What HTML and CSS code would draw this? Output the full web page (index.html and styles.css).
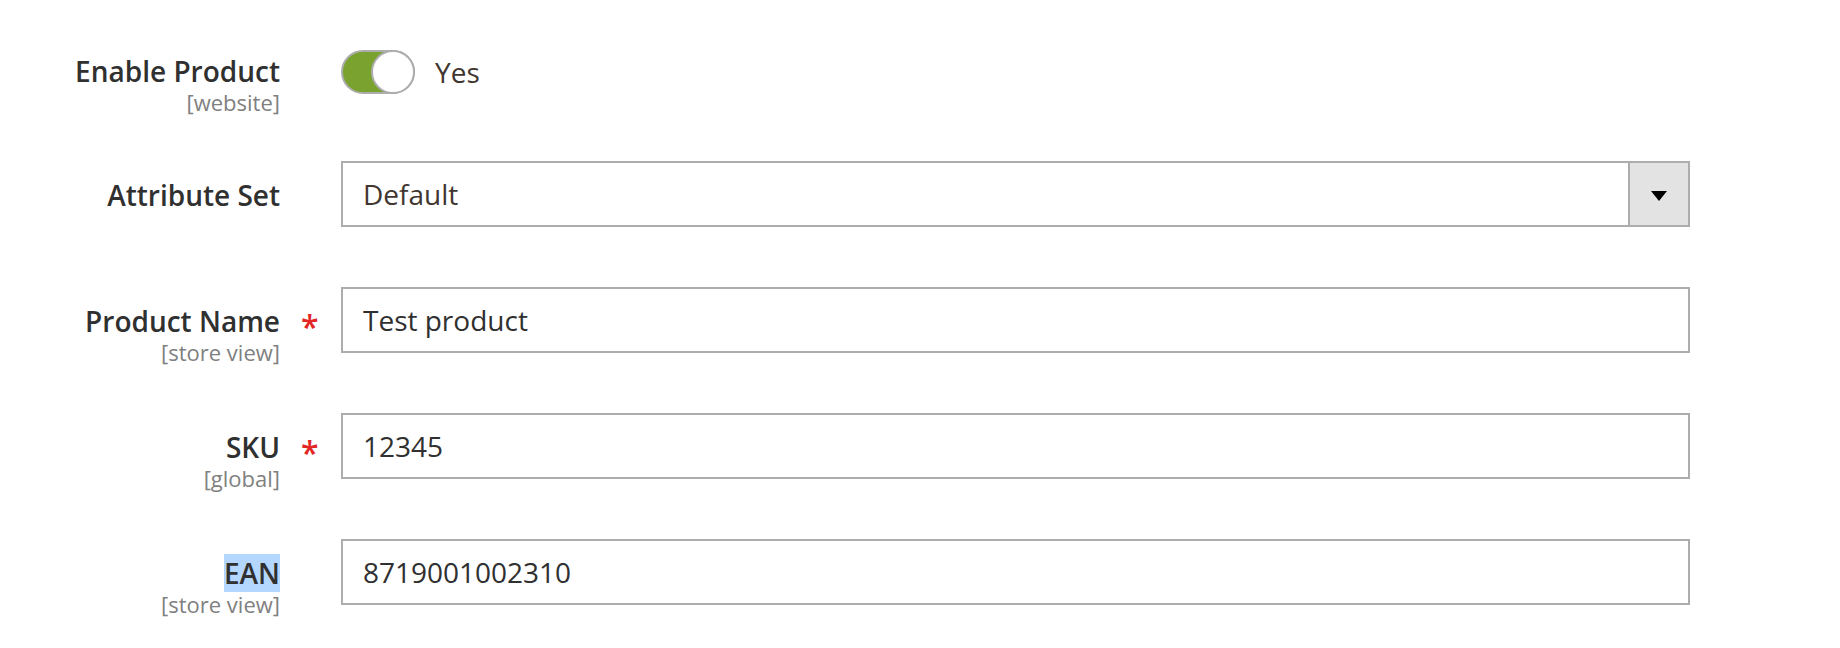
FILE: index.html
```html
<!DOCTYPE html>
<html lang="en">
<head>
<meta charset="utf-8">
<title>Product</title>
<link rel="stylesheet" href="styles.css">
</head>
<body>
<form class="form">
  <div class="field field-switch">
    <div class="field-label">
      <div class="label-text">Enable Product</div>
      <div class="scope">[website]</div>
    </div>
    <div class="req"></div>
    <div class="control switch-control">
      <span class="toggle"><span class="knob"></span></span>
      <span class="switch-text">Yes</span>
    </div>
  </div>

  <div class="field">
    <div class="field-label">
      <div class="label-text">Attribute Set</div>
    </div>
    <div class="req"></div>
    <div class="control">
      <div class="select">
        <div class="select-value">Default</div>
        <div class="select-btn"><span class="arrow"></span></div>
      </div>
    </div>
  </div>

  <div class="field">
    <div class="field-label">
      <div class="label-text">Product Name</div>
      <div class="scope">[store view]</div>
    </div>
    <div class="req"><span class="star">*</span></div>
    <div class="control">
      <input class="input" type="text" value="Test product">
    </div>
  </div>

  <div class="field">
    <div class="field-label">
      <div class="label-text">SKU</div>
      <div class="scope">[global]</div>
    </div>
    <div class="req"><span class="star">*</span></div>
    <div class="control">
      <input class="input" type="text" value="12345">
    </div>
  </div>

  <div class="field">
    <div class="field-label">
      <div class="label-text"><span class="selected">EAN</span></div>
      <div class="scope">[store view]</div>
    </div>
    <div class="req"></div>
    <div class="control">
      <input class="input" type="text" value="8719001002310">
    </div>
  </div>
</form>
</body>
</html>
```
FILE: styles.css
```css
html, body {
  margin: 0;
  padding: 0;
  background: #ffffff;
}

body {
  font-family: "Open Sans", "Liberation Sans", sans-serif;
  color: #303030;
}

.form {
  padding-top: 35px;
}

.field {
  display: grid;
  grid-template-columns: 280px 61px 1349px;
  height: 66px;
  margin-bottom: 60px;
}

.field-label {
  text-align: right;
  padding-top: 15px;
}

.field-switch .field-label {
  padding-top: 17px;
}

.label-text {
  font-size: 28px;
  font-weight: 600;
  line-height: 38px;
  color: #303030;
  white-space: nowrap;
}

.selected {
  background: #b4d7ff;
}

.scope {
  font-size: 22px;
  line-height: 25px;
  color: #808080;
  white-space: nowrap;
}

.req {
  padding-left: 21px;
  padding-top: 24px;
}

.star {
  display: inline-block;
  font-size: 32px;
  line-height: 1;
  font-weight: 600;
  color: #e22626;
}

.control {
  min-width: 0;
}

.switch-control {
  display: flex;
  align-items: center;
  padding-top: 15px;
  align-self: start;
}

.toggle {
  position: relative;
  display: block;
  width: 74px;
  height: 44px;
  box-sizing: border-box;
  border: 2px solid #adadad;
  border-radius: 22px;
  background: #79a22e;
}

.knob {
  position: absolute;
  top: -2px;
  right: -2px;
  width: 44px;
  height: 44px;
  box-sizing: border-box;
  border: 2px solid #adadad;
  border-radius: 50%;
  background: #ffffff;
}

.switch-text {
  margin-left: 20px;
  font-size: 28px;
  line-height: 38px;
  color: #41362f;
}

.select {
  display: flex;
  height: 66px;
  box-sizing: border-box;
  border: 2px solid #adadad;
  background: #ffffff;
}

.select-value {
  flex: 1;
  display: flex;
  align-items: center;
  padding: 0 20px;
  font-size: 28px;
  color: #41362f;
}

.select-btn {
  width: 60px;
  box-sizing: border-box;
  border-left: 2px solid #adadad;
  background: #e3e3e3;
  display: flex;
  align-items: center;
  justify-content: center;
}

.arrow {
  display: block;
  width: 0;
  height: 0;
  margin-top: 4px;
  border-style: solid;
  border-width: 10px 8px 0 8px;
  border-color: #000000 transparent transparent transparent;
}

.input {
  display: block;
  width: 100%;
  height: 66px;
  box-sizing: border-box;
  margin: 0;
  padding: 0 20px;
  border: 2px solid #adadad;
  border-radius: 0;
  background: #ffffff;
  font-family: "Open Sans", "Liberation Sans", sans-serif;
  font-size: 28px;
  color: #303030;
  outline: none;
}
```
